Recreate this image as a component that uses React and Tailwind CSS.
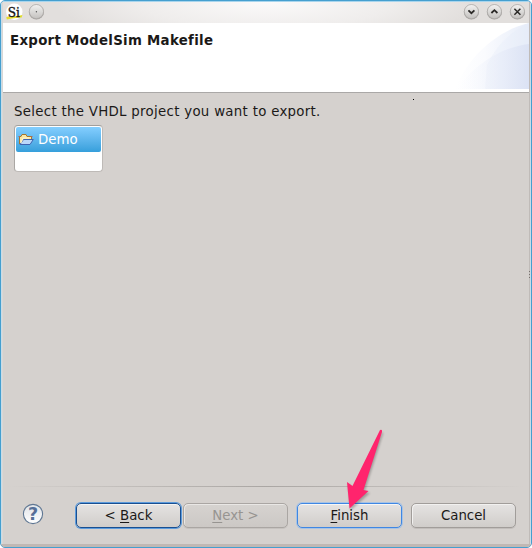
import React from "react";

function TitleButton({ children }) {
  return (
    <svg className="size-4 shrink-0 overflow-visible" viewBox="0 0 16 16" fill="none">
      <defs>
        <linearGradient id="knob" x1="0" y1="0" x2="0" y2="1">
          <stop offset="0" stopColor="#f3f2f1" />
          <stop offset="1" stopColor="#c3c1bf" />
        </linearGradient>
      </defs>
      <circle cx="8.4" cy="8" r="7.6" fill="#aaa7a5" />
      <circle cx="8.4" cy="7.6" r="7.1" fill="url(#knob)" stroke="#aaa7a5" strokeWidth="0.7" />
      {children}
    </svg>
  );
}

function TitleBar() {
  return (
    <div className="flex h-[21px] shrink-0 items-start bg-[radial-gradient(ellipse_210px_44px_at_50%_0,#fbfafa_0%,#efedec_60%,#e2dfdd_100%)] pl-[3px] pr-[4px]">
      <svg className="h-[21px] w-[17px] shrink-0" viewBox="0 -1 17 21">
        <circle cx="8.3" cy="8.8" r="8.2" fill="#fff" />
        <path d="M0.3 14 C6 13 11 13.4 16.4 12 L15.7 14.4 C10 15 6 15 0.8 16.6Z" fill="#e6dc2c" />
        <text x="1.8" y="13.6" fontFamily="DejaVu Serif, serif" fontSize="13.5" fill="#151515" stroke="#151515" strokeWidth="0.35" textLength="12.2" lengthAdjust="spacingAndGlyphs">Si</text>
      </svg>
      <div className="ml-[5px] pt-[2px]">
        <TitleButton>
          <circle cx="8.4" cy="7.8" r="0.7" fill="#555" />
        </TitleButton>
      </div>
      <div className="ml-auto flex gap-[7px] pt-[2px]">
        <TitleButton>
          <path d="M5.4 6.4 L8.4 9.2 L11.4 6.4" stroke="#2b2927" strokeWidth="1.8" />
        </TitleButton>
        <TitleButton>
          <path d="M5.4 9 L8.4 6.2 L11.4 9" stroke="#2b2927" strokeWidth="1.8" />
        </TitleButton>
        <TitleButton>
          <path d="M5.4 4.8 L11.4 10.8 M11.4 4.8 L5.4 10.8" stroke="#2b2927" strokeWidth="1.5" />
        </TitleButton>
      </div>
    </div>
  );
}

function Banner() {
  return (
    <div className="flex h-[70px] shrink-0 justify-between border-b border-[#aaa8a7] bg-white">
      <h1 className="whitespace-nowrap pl-[7px] pt-[10px] text-[13.33px] font-bold leading-4 tracking-[0.3px]">Export ModelSim Makefile</h1>
      <svg className="h-[66px] w-[74px] shrink-0" viewBox="0 0 74 66">
        <defs>
          <linearGradient id="wave" x1="0" x2="1" y1="0" y2="0">
            <stop offset="0" stopColor="#fff" />
            <stop offset="0.4" stopColor="#fafbfe" />
            <stop offset="1" stopColor="#e7edf9" />
          </linearGradient>
          <linearGradient id="waveFront" x1="0" x2="1" y1="0" y2="0">
            <stop offset="0" stopColor="#f7f9fe" stopOpacity="0" />
            <stop offset="1" stopColor="#dbe2f4" />
          </linearGradient>
        </defs>
        <path d="M0 66 C12 36 40 8 74 0 V66Z" fill="url(#wave)" />
        <path d="M32 42 C40 25 54 9 74 0 V66 H30Z" fill="#e5ebf8" opacity="0.3" />
        <path d="M2 66 C18 44 42 25 74 21 V66Z" fill="url(#waveFront)" />
      </svg>
    </div>
  );
}

function FolderIcon() {
  return (
    <svg className="h-[13px] w-4 shrink-0" viewBox="0 0 16 13">
      <path d="M1.5 11 V3.5 H3 L4 1.5 H8 L9 3.5 H13.5 V6" fill="#fbe7a5" stroke="#a8762c" />
      <path d="M2 3.5 H0.5 M13 3.5 H14.5" stroke="#a66b62" />
      <path d="M2 11.5 L5.5 6.5 H15.3 L12 11.5Z" fill="#b9d7fb" stroke="#3f63b0" />
      <path d="M3 10 L5 5 H11" fill="none" stroke="#fff6cf" />
    </svg>
  );
}

const variants = {
  default: "border-[#194f91] shadow-[0_0_0_1px_#5c9bdc,inset_0_1px_0_#f5f4f3]",
  disabled: "border-[#aaa6a3] text-[#979491] shadow-[inset_1px_1px_0_#e9e7e5,0_1px_0_#c6c2bf]",
  focused: "border-[#3f87e3] shadow-[0_0_0_1px_#a7c3e5,inset_0_1px_0_#f7f6f5]",
  normal: "border-[#a19d9a] shadow-[inset_1px_1px_0_#f2f1f0,0_1px_0_#c2bebb]",
};

function Button({ variant, children }) {
  return (
    <button
      className={`h-[25px] w-[105px] shrink-0 whitespace-nowrap rounded-[5px] border bg-linear-to-b text-[13.33px] leading-[22px] ${variant === "disabled" ? "from-[#d6d3d0] to-[#ccc8c5]" : "from-[#e5e3e2] to-[#d0cdca]"} ${variants[variant]}`}
    >
      {children}
    </button>
  );
}

const Key = ({ children }) => <span className="underline decoration-1 underline-offset-2">{children}</span>;

function Footer() {
  return (
    <footer className="flex h-[57px] shrink-0 items-start pl-5 pt-[15px]">
      <svg className="h-[22px] w-5 shrink-0 overflow-visible" viewBox="0 0 20 22">
        <defs>
          <linearGradient id="help" x1="0" y1="0" x2="0" y2="1">
            <stop offset="0" stopColor="#e0e3e7" />
            <stop offset="1" stopColor="#fff" />
          </linearGradient>
        </defs>
        <circle cx="10" cy="12" r="9.6" fill="url(#help)" stroke="#5f7793" strokeWidth="1.1" />
        <text x="10" y="18" textAnchor="middle" fontFamily="DejaVu Sans, sans-serif" fontSize="17.5" fontWeight="bold" fill="#566f98">?</text>
      </svg>
      <div className="ml-[33px] flex pt-px">
        <Button variant="default">&lt; <Key>B</Key>ack</Button>
        <div className="ml-[2px] flex">
          <Button variant="disabled"><Key>N</Key>ext &gt;</Button>
        </div>
        <div className="ml-[9px] flex gap-[9px]">
          <Button variant="focused"><Key>F</Key>inish</Button>
          <Button variant="normal">Cancel</Button>
        </div>
      </div>
    </footer>
  );
}

export default function App() {
  return (
    <div className="h-[548px] w-[532px] bg-white font-['DejaVu_Sans',sans-serif] text-[#1b1918]">
      <div className="relative flex h-full flex-col overflow-hidden rounded-[5px] border border-[#459fcf] bg-[#d5d1ce]">
        <div className="flex min-h-0 flex-1 flex-col border-x border-t border-x-[#c8dce8] border-t-[#a8d5ed]">
          <div className="flex min-h-0 flex-1 flex-col border-x border-l-[#dad7d4] border-r-[#c0bbb8]">
            <TitleBar />
            <Banner />
            <main className="flex min-h-0 flex-1 flex-col items-start pl-[11px] pt-[11px]">
              <p className="whitespace-nowrap text-[13.33px] leading-4 tracking-[0.3px]">Select the VHDL project you want to export.</p>
              <div className="mt-[5px] h-[47px] w-[89px] rounded-[4px] border border-t-[#a29f9c] border-l-[#aaa7a4] border-r-[#bebab7] border-b-[#bebab7] bg-white p-px">
                <div className="flex h-[25px] items-center rounded-[2px] bg-linear-to-b from-[#83ceff] to-[#359fdb] pl-[2px] text-[13.33px] text-white">
                  <FolderIcon />
                  <span className="ml-1">Demo</span>
                </div>
              </div>
            </main>
            <div className="mx-1 h-px shrink-0 bg-linear-to-r from-transparent via-[#aaa6a3] to-transparent" />
            <Footer />
          </div>
        </div>
        <div className="h-[3px] shrink-0 bg-[#c0b8b4]" />
        <span className="absolute left-[412px] top-[98px] size-px bg-black" />
        <div className="absolute left-[528px] top-[270px] flex flex-col gap-[2px]">
          <i className="size-px bg-[#77716d]" />
          <i className="size-px bg-[#77716d]" />
          <i className="size-px bg-[#77716d]" />
        </div>
        <svg className="absolute left-[344px] top-[426px] h-[88px] w-[44px] overflow-visible" viewBox="345 427 44 88">
          <path d="M381 430 Q382.5 430 382 432 L363.5 490 L369 491 L349.5 508.5 L347 482 L352.5 486 Z" transform="translate(1 2)" fill="#00000040" className="blur-[1px]" />
          <path d="M380 430 Q382.5 429 382 432 L363.5 490 L368.5 491 L349.5 508.5 L347 482 L352.5 486 Z" fill="#ff246d" />
        </svg>
      </div>
    </div>
  );
}
